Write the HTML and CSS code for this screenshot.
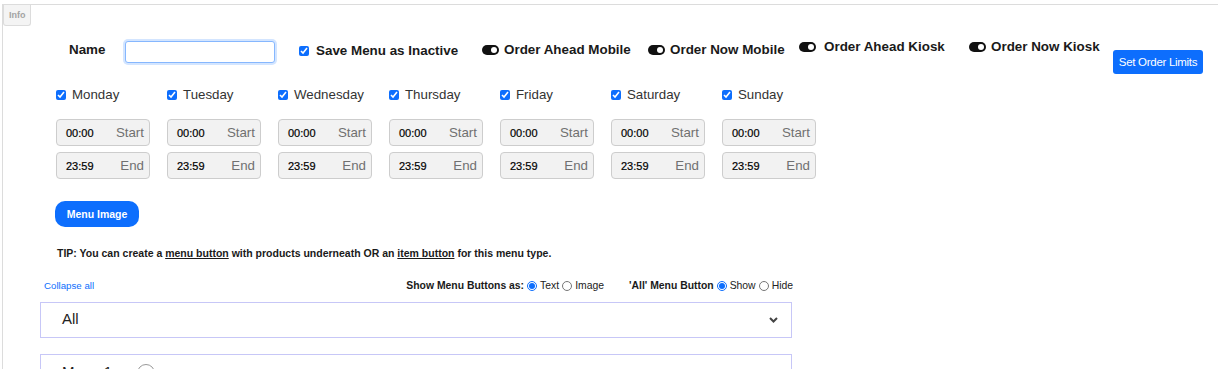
FILE: index.html
```html
<!DOCTYPE html>
<html lang="en">
<head>
  <meta charset="UTF-8">
  <title>Menu Editor</title>
  <link rel="stylesheet" href="styles.css">
</head>
<body>

  <div class="panel">
    <div class="tab">Info</div>

    <!-- Name, inactive flag and ordering switches -->
    <div class="head-row">
      <label class="name-label">Name</label>
      <input type="text" class="name-input">
      <label class="check-item save-item">
        <input type="checkbox" checked>
        <span>Save Menu as Inactive</span>
      </label>
      <div class="switch-item sw-ahead-mobile">
        <span class="switch"><span class="knob"></span></span>
        <span>Order Ahead Mobile</span>
      </div>
      <div class="switch-item sw-now-mobile">
        <span class="switch"><span class="knob"></span></span>
        <span>Order Now Mobile</span>
      </div>
      <div class="switch-item sw-ahead-kiosk">
        <span class="switch"><span class="knob"></span></span>
        <span>Order Ahead Kiosk</span>
      </div>
      <div class="switch-item sw-now-kiosk">
        <span class="switch"><span class="knob"></span></span>
        <span>Order Now Kiosk</span>
      </div>
      <button class="btn-limits">Set Order Limits</button>
    </div>

    <!-- Day schedule -->
    <div class="days">
      <div class="day">
        <label class="day-label"><input type="checkbox" checked><span>Monday</span></label>
        <div class="time-box start"><span class="time">00:00</span><span class="hint">Start</span></div>
        <div class="time-box"><span class="time">23:59</span><span class="hint">End</span></div>
      </div>
      <div class="day">
        <label class="day-label"><input type="checkbox" checked><span>Tuesday</span></label>
        <div class="time-box start"><span class="time">00:00</span><span class="hint">Start</span></div>
        <div class="time-box"><span class="time">23:59</span><span class="hint">End</span></div>
      </div>
      <div class="day">
        <label class="day-label"><input type="checkbox" checked><span>Wednesday</span></label>
        <div class="time-box start"><span class="time">00:00</span><span class="hint">Start</span></div>
        <div class="time-box"><span class="time">23:59</span><span class="hint">End</span></div>
      </div>
      <div class="day">
        <label class="day-label"><input type="checkbox" checked><span>Thursday</span></label>
        <div class="time-box start"><span class="time">00:00</span><span class="hint">Start</span></div>
        <div class="time-box"><span class="time">23:59</span><span class="hint">End</span></div>
      </div>
      <div class="day">
        <label class="day-label"><input type="checkbox" checked><span>Friday</span></label>
        <div class="time-box start"><span class="time">00:00</span><span class="hint">Start</span></div>
        <div class="time-box"><span class="time">23:59</span><span class="hint">End</span></div>
      </div>
      <div class="day">
        <label class="day-label"><input type="checkbox" checked><span>Saturday</span></label>
        <div class="time-box start"><span class="time">00:00</span><span class="hint">Start</span></div>
        <div class="time-box"><span class="time">23:59</span><span class="hint">End</span></div>
      </div>
      <div class="day">
        <label class="day-label"><input type="checkbox" checked><span>Sunday</span></label>
        <div class="time-box start"><span class="time">00:00</span><span class="hint">Start</span></div>
        <div class="time-box"><span class="time">23:59</span><span class="hint">End</span></div>
      </div>
    </div>

    <div class="image-row">
      <button class="btn-image">Menu Image</button>
    </div>

    <p class="tip">TIP: You can create a <u>menu button</u> with products underneath OR an <u>item button</u> for this menu type.</p>

    <!-- Display options -->
    <div class="options-row">
      <a href="#" class="collapse-link">Collapse all</a>
      <div class="radio-set set-buttons">
        <b>Show Menu Buttons as:</b>
        <label><input type="radio" name="showAs" checked>Text</label>
        <label><input type="radio" name="showAs">Image</label>
      </div>
      <div class="radio-set set-all">
        <b>'All' Menu Button</b>
        <label><input type="radio" name="allBtn" checked>Show</label>
        <label><input type="radio" name="allBtn">Hide</label>
      </div>
    </div>

    <!-- Menu accordions -->
    <div class="accordion">
      <div class="acc-item">
        <span class="acc-title">All</span>
        <svg class="chevron" width="9" height="6" viewBox="0 0 9 6">
          <polyline points="1,1 4.5,4.5 8,1" fill="none" stroke="#444" stroke-width="2"/>
        </svg>
      </div>
      <div class="acc-item menu-item">
        <span class="acc-title">Menu 1</span>
        <span class="add-circle">+</span>
      </div>
    </div>
  </div>

</body>
</html>
```

FILE: styles.css
```css
/* Page */
html, body {
  margin: 0;
  padding: 0;
  height: 369px;
  overflow: hidden;
  background: #fff;
  font-family: "Liberation Sans", Arial, sans-serif;
  color: #222;
}

.panel {
  margin: 4px 0 0 2px;
  border-top: 1px solid #dcdcdc;
  border-left: 1px solid #dcdcdc;
  height: 400px;
}

/* Little "Info" tab top-left */
.tab {
  width: 28px;
  height: 21px;
  box-sizing: border-box;
  background: #f4f4f4;
  border: 1px solid #dcdcdc;
  border-top: none;
  border-radius: 0 0 3px 3px;
  font-size: 9px;
  font-weight: bold;
  color: #a3a3a3;
  padding: 5px 0 0 5px;
}

/******************************************************
 * HEADER ROW
 ******************************************************/
.head-row {
  display: flex;
  align-items: flex-start;
  margin-top: 15px;
  padding-left: 66px;
  white-space: nowrap;
  font-size: 13.4px;
  font-weight: bold;
  color: #1a1a1a;
}
.name-label {
  width: 56px;
  line-height: 16px;
  margin-top: 1px;
}
.name-input {
  width: 150px;
  height: 22px;
  box-sizing: border-box;
  border: 1px solid #86b7fe;
  border-radius: 3px;
  box-shadow: 0 0 0 2px rgba(13, 110, 253, 0.18);
  outline: none;
  margin: 0;
}
.check-item {
  display: flex;
  align-items: center;
  gap: 7px;
  line-height: 16px;
  margin-top: 2px;
}
.save-item {
  margin-left: 24px;
  width: 183px;
}
input[type="checkbox"] {
  width: 10px;
  height: 10px;
  margin: 0;
  accent-color: #0d6efd;
}

/* Black toggle switches */
.switch-item {
  display: flex;
  align-items: center;
  gap: 5px;
  line-height: 16px;
  margin-top: 1px;
}
.switch {
  display: flex;
  align-items: center;
  justify-content: flex-end;
  width: 17px;
  height: 10px;
  box-sizing: border-box;
  padding: 0 2px;
  background: #111;
  border-radius: 5px;
}
.knob {
  width: 6px;
  height: 6px;
  border-radius: 50%;
  background: #fff;
}
.sw-ahead-mobile { width: 166px; }
.sw-now-mobile { width: 151px; }
.sw-ahead-kiosk { width: 170px; margin-top: -2px; gap: 8px; }
.sw-now-kiosk { width: 144px; margin-top: -2px; }

.btn-limits {
  margin-top: 9px;
  width: 90px;
  height: 24px;
  padding: 0;
  border: none;
  border-radius: 3px;
  background: #0d6efd;
  color: #fff;
  font-family: "Liberation Sans", Arial, sans-serif;
  font-size: 11.5px;
  letter-spacing: -0.3px;
}

/******************************************************
 * DAYS
 ******************************************************/
.days {
  display: flex;
  margin-top: 12px;
  padding-left: 53px;
}
.day {
  width: 111px;
}
.day-label {
  display: flex;
  align-items: center;
  gap: 6px;
  line-height: 16px;
  font-size: 13.3px;
  color: #333;
  padding-top: 1px;
}
.time-box {
  display: flex;
  align-items: center;
  justify-content: space-between;
  width: 94px;
  height: 27px;
  box-sizing: border-box;
  margin-top: 6px;
  padding: 0 5px 0 9px;
  background: #f2f2f2;
  border: 1px solid #cdcdcd;
  border-radius: 4px;
}
.time-box.start {
  margin-top: 16px;
}
.time {
  font-size: 11px;
  color: #000;
  -webkit-text-stroke: 0.2px #000;
}
.hint {
  font-size: 13.3px;
  color: #707070;
}

/******************************************************
 * IMAGE BUTTON + TIP
 ******************************************************/
.image-row {
  margin-top: 22px;
  padding-left: 52px;
}
.btn-image {
  width: 84px;
  height: 26px;
  padding: 0;
  border: none;
  border-radius: 10px;
  background: #0d6efd;
  color: #fff;
  font-family: "Liberation Sans", Arial, sans-serif;
  font-size: 10.5px;
  font-weight: bold;
}
.tip {
  margin: 19px 0 0;
  padding-left: 54px;
  font-size: 10.5px;
  font-weight: bold;
  line-height: 14px;
  color: #1a1a1a;
}

/******************************************************
 * OPTIONS ROW
 ******************************************************/
.options-row {
  display: flex;
  align-items: center;
  margin-top: 19px;
  margin-left: 41px;
  width: 749px;
  line-height: 14px;
  font-size: 10.4px;
  white-space: nowrap;
}
.collapse-link {
  font-size: 9.7px;
  color: #0d6efd;
  text-decoration: none;
}
.radio-set {
  display: flex;
  align-items: center;
  gap: 3px;
  color: #1a1a1a;
}
.radio-set label {
  display: flex;
  align-items: center;
  gap: 3px;
  color: #222;
}
.set-buttons {
  margin-left: auto;
}
.set-all {
  margin-left: 25px;
}
input[type="radio"] {
  width: 10px;
  height: 10px;
  margin: 0;
  accent-color: #0d6efd;
}

/******************************************************
 * ACCORDION
 ******************************************************/
.accordion {
  margin-top: 9px;
  margin-left: 37px;
  width: 752px;
}
.acc-item {
  display: flex;
  align-items: center;
  justify-content: space-between;
  height: 36px;
  box-sizing: border-box;
  padding: 0 13px 3px 21px;
  border: 1px solid #c7c7f7;
  font-size: 15px;
  color: #222;
}
.chevron {
  margin-top: 3px;
}
.menu-item {
  justify-content: flex-start;
  align-items: flex-start;
  margin-top: 16px;
  height: 60px;
  padding-top: 8px;
}
.add-circle {
  display: flex;
  align-items: center;
  justify-content: center;
  width: 18px;
  height: 18px;
  margin-left: 25px;
  margin-top: 1px;
  box-sizing: border-box;
  border: 1px solid #999;
  border-radius: 50%;
  font-size: 12px;
  color: #555;
}
```
